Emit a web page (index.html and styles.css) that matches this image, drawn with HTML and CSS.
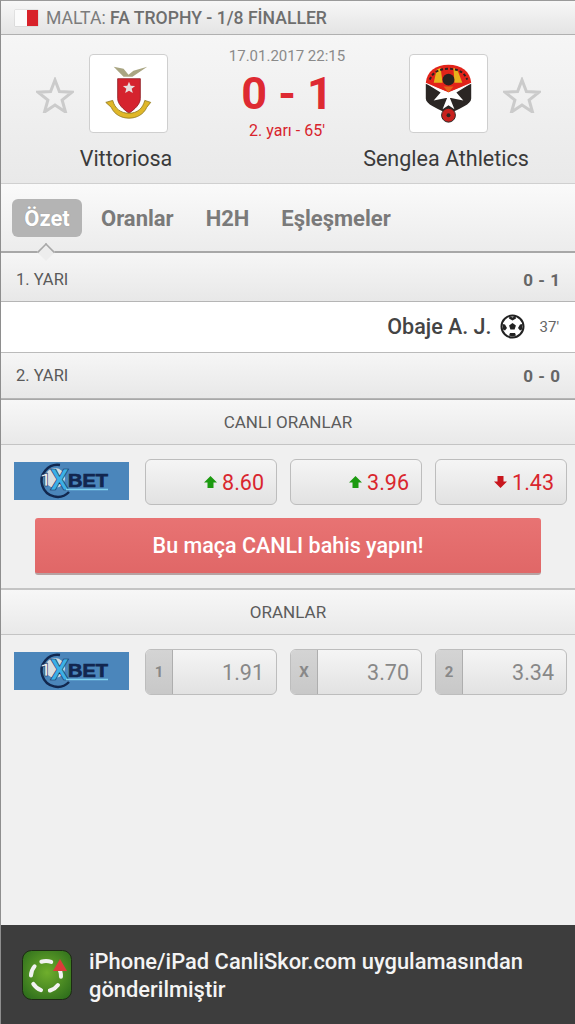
FILE: index.html
```html
<!DOCTYPE html>
<html lang="tr">
<head>
  <meta charset="UTF-8" />
  <meta name="viewport" content="width=device-width, initial-scale=1.0"/>
  <title>CanliSkor</title>
  <link rel="stylesheet" href="styles.css">
</head>
<body>
  <div class="page">
    <div class="league">
      <span class="flag"><span class="flag-white"></span><span class="flag-red"></span></span>
      <span>MALTA: <strong>FA TROPHY - 1/8 FİNALLER</strong></span>
    </div>

    <div class="match">
      <svg class="star star-left" viewBox="0 0 38 36">
        <path d="M19 3l4.400 11.500 12.600.7-9.900 7.800 3.400 12-10.500-6.900-10.500 6.900 3.400-12L2 15.200l12.600-.7z" fill="none" stroke="#cbcbcb" stroke-width="3"/>
      </svg>
      <div class="team team-left">
        <div class="crest">
          <svg width="77" height="77" viewBox="0 0 78 78">
            <path d="M24 12l10 2 5 6 5-4 14-4-9 6-6 4H34z" fill="#a9a582"/>
            <path d="M28 24h23v20c0 6-6 11-11.500 15C34 55 28 50 28 44z" fill="#d5232e" stroke="#8c1c22" stroke-width=".8"/>
            <path d="M39.500 27l1.700 4.200 4.500.2-3.500 2.800 1.200 4.400-3.900-2.500-3.900 2.500 1.200-4.400-3.500-2.800 4.500-.2z" fill="#e8dede"/>
            <path d="M16 48l7-2c2 8 8 13 16.500 13s14-5 16-13l6 2-4 5c-3 7-10 11-18 11s-15-4-18-11z" fill="#e0b728" stroke="#8c7416" stroke-width=".8"/>
          </svg>
        </div>
        <div class="team-name">Vittoriosa</div>
      </div>
      <div class="score-box">
        <div class="date">17.01.2017 22:15</div>
        <div class="score">0 - 1</div>
        <div class="minute">2. yarı - 65'</div>
      </div>
      <div class="team team-right">
        <div class="crest">
          <svg width="77" height="77" viewBox="0 0 78 78">
            <path d="M16 28C17 17 26 10 39 10s22 7 23 18L39 38z" fill="#e2231a"/>
            <path d="M24 28l3-13 4-2 2 15zM45 28l-1-15 4 2 5 13z" fill="#e8b21c"/>
            <path d="M20 25c3-8 10-11 19-11s16 3 19 11" fill="none" stroke="#2a2320" stroke-width="2" stroke-dasharray="3 2"/>
            <circle cx="39" cy="25" r="6" fill="#2a2320"/>
            <path d="M16 29l23 11 23-11v15c0 6-12 10-17 13H33c-5-3-17-7-17-13z" fill="#2b2624"/>
            <path d="M18 30l21 8 21-8-13 8 7 8-15-3-15 3 7-8zM39 40l6 15-6-4-6 4z" fill="#fff"/>
            <path d="M34 32h10l-5 6z" fill="#e2631a"/>
            <circle cx="39" cy="61" r="7" fill="#c8201d" stroke="#2b2624"/>
            <circle cx="39" cy="61" r="2" fill="#2b2624"/>
          </svg>
        </div>
        <div class="team-name">Senglea Athletics</div>
      </div>
      <svg class="star star-right" viewBox="0 0 38 36">
        <path d="M19 3l4.400 11.500 12.600.7-9.900 7.800 3.400 12-10.500-6.900-10.500 6.900 3.400-12L2 15.200l12.600-.7z" fill="none" stroke="#cbcbcb" stroke-width="3"/>
      </svg>
    </div>

    <div class="tabs">
      <span class="tab tab-active">Özet</span>
      <span class="tab">Oranlar</span>
      <span class="tab">H2H</span>
      <span class="tab">Eşleşmeler</span>
      <span class="tab-notch"></span>
    </div>

    <div class="half half-first"><span>1. YARI</span><strong>0 - 1</strong></div>
    <div class="event">
      <span class="player">Obaje A. J.</span>
      <svg class="ball" width="25" height="25" viewBox="0 0 25 25">
        <circle cx="12.500" cy="12.500" r="11" fill="#fff" stroke="#222" stroke-width="2"/>
        <path d="M12.500 9l3.400 2.500-1.300 4h-4.200l-1.300-4z" fill="#222"/>
        <path d="M9.500 2l3 1.500 3-1.500 .5 2.500-3.500 2-3.500-2zM22.500 10l-2.500.5-2 3.500 2 2.500 2-1zM2.500 10l2.500.5 2 3.500-2 2.500-2-1zM9 21.500l1-2.500h5l1 2.500-3.500 1z" fill="#222"/>
      </svg>
      <span class="event-min">37'</span>
    </div>
    <div class="half"><span>2. YARI</span><strong>0 - 0</strong></div>

    <div class="section-title">CANLI ORANLAR</div>
    <div class="odds-row">
      <svg class="bookie" viewBox="0 0 115 38">
        <rect width="115" height="38" fill="#4b86bb"/>
        <path d="M46 3A16 16 0 1 0 55 30" fill="none" stroke="#12284f" stroke-width="2.500"/>
        <circle cx="41" cy="16" r="10" fill="#d9dee0"/>
        <text class="bookie-one" x="26" y="24">1</text>
        <text class="bookie-x" x="36" y="28">X</text>
        <text class="bookie-bet" x="54" y="25" textLength="40" lengthAdjust="spacingAndGlyphs">BET</text>
        <path d="M52 27.500h42" stroke="#7fd0ee" stroke-width="1.500"/>
      </svg>
      <button class="odd"><svg class="arrow" viewBox="0 0 13 12"><path d="M6.500 0L13 6.500H9.500V12h-6V6.500H0z" fill="#1c9a10"/></svg><span>8.60</span></button>
      <button class="odd"><svg class="arrow" viewBox="0 0 13 12"><path d="M6.500 0L13 6.500H9.500V12h-6V6.500H0z" fill="#1c9a10"/></svg><span>3.96</span></button>
      <button class="odd"><svg class="arrow" viewBox="0 0 13 12"><path d="M6.500 12L13 5.500H9.500V0h-6v5.500H0z" fill="#c8161d"/></svg><span>1.43</span></button>
    </div>
    <div class="cta-wrap">
      <button class="cta">Bu maça CANLI bahis yapın!</button>
    </div>

    <div class="section-title section-title-two">ORANLAR</div>
    <div class="odds-row">
      <svg class="bookie" viewBox="0 0 115 38">
        <rect width="115" height="38" fill="#4b86bb"/>
        <path d="M46 3A16 16 0 1 0 55 30" fill="none" stroke="#12284f" stroke-width="2.500"/>
        <circle cx="41" cy="16" r="10" fill="#d9dee0"/>
        <text class="bookie-one" x="26" y="24">1</text>
        <text class="bookie-x" x="36" y="28">X</text>
        <text class="bookie-bet" x="54" y="25" textLength="40" lengthAdjust="spacingAndGlyphs">BET</text>
        <path d="M52 27.500h42" stroke="#7fd0ee" stroke-width="1.500"/>
      </svg>
      <div class="odd odd-plain"><span class="odd-label">1</span><span class="odd-value">1.91</span></div>
      <div class="odd odd-plain"><span class="odd-label">X</span><span class="odd-value">3.70</span></div>
      <div class="odd odd-plain"><span class="odd-label">2</span><span class="odd-value">3.34</span></div>
    </div>

    <div class="spacer"></div>

    <div class="promo">
      <svg class="app-icon" width="50" height="50" viewBox="0 0 50 50">
        <defs>
          <radialGradient id="appGreen" cx="50%" cy="45%" r="65%">
            <stop offset="0" stop-color="#6fae2c"/>
            <stop offset="1" stop-color="#2f6f1c"/>
          </radialGradient>
        </defs>
        <rect x=".5" y=".5" width="49" height="49" rx="9" fill="url(#appGreen)" stroke="#1d2a14"/>
        <circle cx="24" cy="26" r="15" fill="none" stroke="#f2f2f2" stroke-width="4" stroke-dasharray="10 8.850" stroke-linecap="round" transform="rotate(-108 24 26)"/>
        <path d="M38 9l7 12H31z" fill="#dd3b3b"/>
      </svg>
      <div class="promo-text">iPhone/iPad CanliSkor.com uygulamasından gönderilmiştir</div>
    </div>
  </div>
</body>
</html>
```

FILE: styles.css
```css
* {
  box-sizing: border-box;
}

body {
  margin: 0;
  font-family: Roboto, "Noto Sans", sans-serif;
  background-color: #f0f0f0;
  color: #3c3c3c;
}

.page {
  height: 1024px;
  display: flex;
  flex-direction: column;
  border-left: 1px solid #8e8e8e;
  border-top: 1px solid #9a9a9a;
  overflow: hidden;
}

.league {
  height: 34px;
  display: flex;
  align-items: center;
  gap: 8px;
  padding-left: 14px;
  font-size: 17.6px;
  color: #7c7c7c;
  background: linear-gradient(#f7f7f7, #e4e4e4);
  border-bottom: 1px solid #b0b0b0;
}

.league strong {
  font-weight: 500;
  color: #6e6e6e;
}

.flag {
  display: flex;
  width: 23px;
  height: 16px;
  box-shadow: 0 0 1px #999;
}

.flag-white {
  flex: 1;
  background: #fbfbfb;
}

.flag-red {
  flex: 1;
  background: #d8222a;
}

.match {
  height: 149px;
  display: grid;
  grid-template-columns: 37px 110px 208px 2px 110px 38px;
  grid-template-areas: "star1 team1 score . team2 star2";
  padding: 19px 0 0 35px;
  background: linear-gradient(#f6f6f6, #e9e9e9);
  border-bottom: 1px solid #d0d0d0;
}

.star {
  width: 38px;
  height: 36px;
  margin-top: 23px;
}

.star-left {
  grid-area: star1;
}

.star-right {
  grid-area: star2;
}

.team {
  display: flex;
  flex-direction: column;
  align-items: center;
}

.team-left {
  grid-area: team1;
}

.team-right {
  grid-area: team2;
}

.crest {
  width: 79px;
  height: 79px;
  flex: none;
  display: flex;
  align-items: center;
  justify-content: center;
  background: #fff;
  border: 1px solid #cfcfcf;
  border-radius: 4px;
}

.team-name {
  margin: 13px 4px 0 0;
  font-size: 21.5px;
  white-space: nowrap;
  color: #3a3a3a;
}

.score-box {
  grid-area: score;
  margin-top: -8px;
  text-align: center;
}

.date {
  font-size: 15px;
  line-height: 20px;
  color: #8a8a8a;
}

.score {
  margin-top: 2px;
  font-size: 45px;
  line-height: 52px;
  font-weight: 700;
  color: #de2a32;
}

.minute {
  margin-top: 1px;
  font-size: 16px;
  color: #d8232c;
}

.tabs {
  height: 69px;
  position: relative;
  display: flex;
  align-items: center;
  gap: 32px;
  padding-left: 11px;
  background: linear-gradient(#fafafa, #ececec);
  border-bottom: 2px solid #a8a8a8;
}

.tab {
  height: 38px;
  line-height: 39px;
  font-size: 22px;
  font-weight: 700;
  color: #7a7a7a;
  border-radius: 6px;
}

.tab-active {
  padding: 0 11px;
  margin-right: -13px;
  min-width: 70px;
  text-align: center;
  color: #fff;
  background: #b4b4b4;
  text-shadow: 0 0 1px #8a8a8a;
}

.tab-notch {
  position: absolute;
  left: 37px;
  bottom: -9px;
  width: 16px;
  height: 16px;
  background: #ededed;
  border-left: 2px solid #a8a8a8;
  border-top: 2px solid #a8a8a8;
  transform: rotate(45deg) scale(.8);
}

.half {
  height: 46px;
  display: flex;
  align-items: center;
  justify-content: space-between;
  padding: 0 15px;
  font-size: 16.5px;
  color: #5a5a5a;
  background: linear-gradient(#f6f6f6, #e8e8e8);
  border-bottom: 1px solid #b5b5b5;
}

.half-first {
  height: 49px;
  padding-top: 5px;
}

.half strong {
  font-size: 17px;
  font-weight: 700;
  word-spacing: 1px;
  color: #666;
}

.event {
  height: 51px;
  display: flex;
  align-items: center;
  justify-content: flex-end;
  padding: 0 16px 1px 0;
  background: #fff;
  border-bottom: 1px solid #bbb;
}

.player {
  font-size: 21.5px;
  font-weight: 500;
  color: #444;
}

.ball {
  margin: 0 15px 0 8px;
}

.event-min {
  font-size: 15px;
  color: #666;
}

.section-title {
  height: 46px;
  line-height: 44px;
  text-align: center;
  font-size: 17px;
  color: #5c5c5c;
  background: linear-gradient(#f7f7f7, #e9e9e9);
  border-top: 1px solid #a8a8a8;
  border-bottom: 1px solid #c4c4c4;
}

.section-title-two {
  border-top-color: #c4c4c4;
}

.odds-row {
  display: flex;
  align-items: center;
  gap: 13px;
  padding: 14px 8px 0 13px;
}

.bookie {
  width: 115px;
  height: 38px;
  flex: none;
  margin: 0 3px 3px 0;
}

.bookie-one {
  font: 700 19px Roboto, sans-serif;
  fill: #f2f2f2;
  stroke: #12284f;
  stroke-width: .6px;
}

.bookie-x {
  font: 700 30px Roboto, sans-serif;
  fill: #3db0e6;
  stroke: #10305c;
  stroke-width: .6px;
}

.bookie-bet {
  font: 700 19px "Liberation Sans", sans-serif;
  fill: #12264f;
  stroke: #12264f;
  stroke-width: .7px;
}

.odd {
  flex: 1;
  height: 46px;
  display: flex;
  align-items: center;
  justify-content: flex-end;
  gap: 5px;
  padding: 0 12px 0 0;
  font-family: inherit;
  font-size: 21.5px;
  color: #d9262e;
  background: linear-gradient(#f5f5f5, #e2e2e2);
  border: 1px solid #bdbdbd;
  border-radius: 6px;
}

.arrow {
  width: 13px;
  height: 12px;
}

.odd-plain {
  padding: 0;
  color: #888;
  overflow: hidden;
}

.odd-label {
  width: 27px;
  height: 100%;
  flex: none;
  display: flex;
  align-items: center;
  justify-content: center;
  font-size: 15px;
  font-weight: 700;
  background: linear-gradient(#d4d4d4, #c8c8c8);
  border-right: 1px solid #aeaeae;
}

.odd-value {
  flex: 1;
  text-align: right;
  padding-right: 12px;
}

.cta-wrap {
  padding: 13px 34px 13px;
  border-bottom: 1px solid #c4c4c4;
}

.cta {
  display: block;
  width: 100%;
  height: 57px;
  font-family: inherit;
  font-size: 21.5px;
  font-weight: 500;
  color: #fff;
  background: linear-gradient(#e87373, #e06767);
  border: none;
  border-bottom: 2px solid #b7a2a2;
  border-radius: 3px;
}

.spacer {
  flex: 1;
}

.promo {
  height: 99px;
  display: flex;
  align-items: center;
  gap: 17px;
  padding: 0 40px 0 21px;
  background: #3d3d3d;
}

.app-icon {
  flex: none;
}

.promo-text {
  margin-top: 3px;
  font-size: 21.9px;
  line-height: 28px;
  font-weight: 500;
  color: #f4f4f4;
}
```
